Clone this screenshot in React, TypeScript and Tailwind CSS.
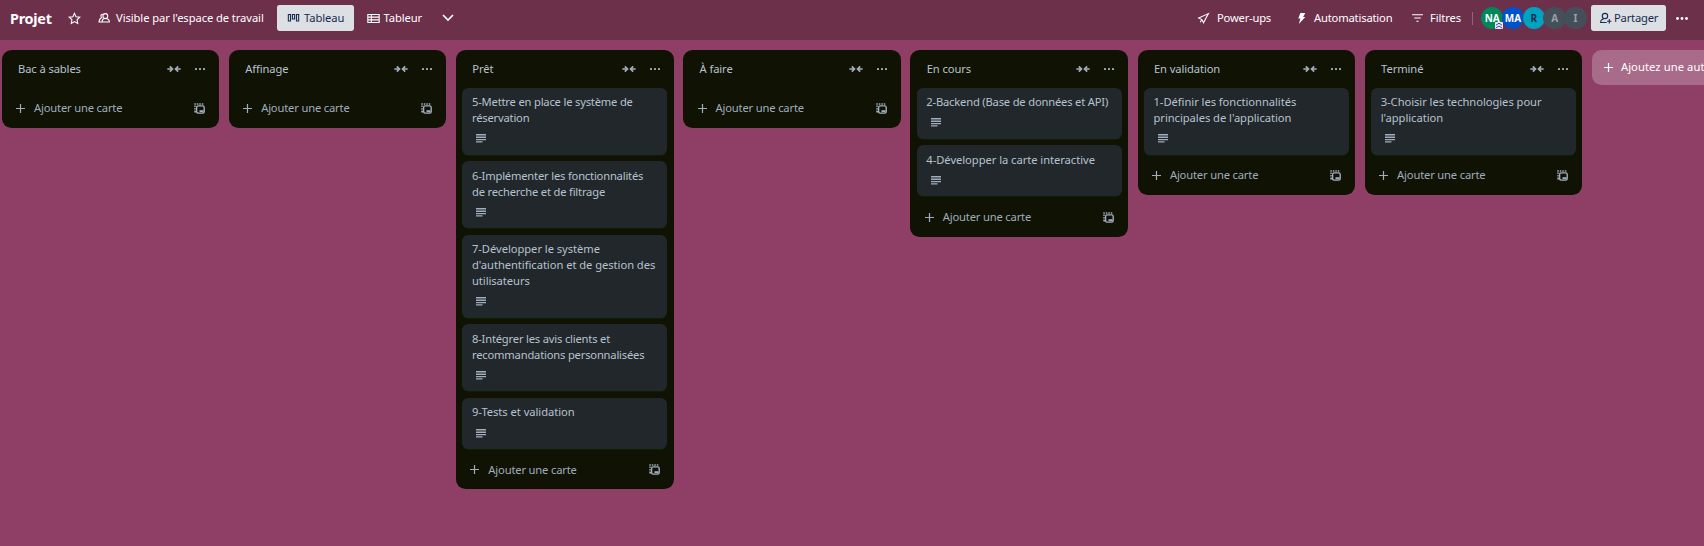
import React from "react";

type CardData = { text: string; tight?: boolean };
type ListData = { title: string; cards: CardData[] };

const lists: ListData[] = [
  { title: "Bac à sables", cards: [] },
  { title: "Affinage", cards: [] },
  {
    title: "Prêt",
    cards: [
      { text: "5-Mettre en place le système de\nréservation", tight: true },
      { text: "6-Implémenter les fonctionnalités\nde recherche et de filtrage", tight: true },
      { text: "7-Développer le système\nd'authentification et de gestion des\nutilisateurs" },
      { text: "8-Intégrer les avis clients et\nrecommandations personnalisées", tight: true },
      { text: "9-Tests et validation" },
    ],
  },
  { title: "À faire", cards: [] },
  {
    title: "En cours",
    cards: [{ text: "2-Backend (Base de données et API)", tight: true }, { text: "4-Développer la carte interactive" }],
  },
  { title: "En validation", cards: [{ text: "1-Définir les fonctionnalités\nprincipales de l'application" }] },
  { title: "Terminé", cards: [{ text: "3-Choisir les technologies pour\nl'application" }] },
];

const members = [
  { initials: "NA", style: "bg-[#00875a] text-white" },
  { initials: "MA", style: "bg-[#0052cc] text-white" },
  { initials: "R", style: "bg-[#00a3bf] text-[#172b4d]" },
  { initials: "A", style: "bg-[#454f59] text-[#9aa0aa]" },
  { initials: "I", style: "bg-[#454f59] text-[#9aa0aa]" },
];

function Icon({ children, className = "" }: { children: React.ReactNode; className?: string }) {
  return (
    <svg viewBox="0 0 24 24" fill="none" stroke="currentColor" strokeWidth="2" className={`size-[13px] shrink-0 ${className}`}>
      {children}
    </svg>
  );
}

const Plus = () => (
  <svg viewBox="0 0 9 9" fill="none" stroke="currentColor" strokeWidth="1.2" className="size-[9px] shrink-0">
    <path d="M4.500 0v9M0 4.500h9" />
  </svg>
);

const Dots = () => (
  <svg viewBox="0 0 10 2" fill="currentColor" className="h-0.5 w-2.5 shrink-0">
    <rect width="2" height="2" rx="0.6" />
    <rect x="4" width="2" height="2" rx="0.6" />
    <rect x="8" width="2" height="2" rx="0.6" />
  </svg>
);

const Collapse = () => (
  <svg viewBox="0 0 14 8" fill="none" stroke="currentColor" strokeWidth="1.700" className="h-2 w-3.5 shrink-0">
    <path d="M0.300 4h5M2.800 1.300L5.500 4 2.800 6.700M13.700 4h-5M11.200 1.300L8.500 4l2.700 2.700" />
  </svg>
);

const Template = () => (
  <svg viewBox="0 0 11 11" fill="none" stroke="currentColor" strokeWidth="1.400" className="size-[11px] shrink-0">
    <rect x="2.600" y="2.900" width="7.600" height="7.200" rx="1.500" />
    <path d="M5.500 8.200h4" strokeWidth="2" />
    <path d="M0.300 1h1.500M2.800 1h1.500M5.300 1h1.500M7.800 1h1.500M1 2.500v1.500M1 5v1.500M1 7.500v1.300h1.500" />
  </svg>
);

function Card({ card }: { card: CardData }) {
  return (
    <li className="rounded-[6.4px] bg-[#22272b] px-[9.6px] pt-[6.4px] pb-[3.2px] shadow-[0_1px_1px_#0308]">
      <p className={`leading-4 whitespace-pre ${card.tight ? "tracking-[-0.19px]" : "tracking-[-0.05px]"}`}>{card.text}</p>
      <div className="flex h-[25.6px] items-center pl-[4.4px] text-[#9fadbc]">
        <svg viewBox="0 0 10 9" className="h-[9px] w-2.5" fill="currentColor">
          <path d="M0 0h10v1.400H0zM0 2.600h10v1.300H0zM0 5h10v1.200H0zM0 7.300h6.500v1.200H0z" />
        </svg>
      </div>
    </li>
  );
}

function List({ list }: { list: ListData }) {
  return (
    <section className="w-[217.6px] shrink-0 rounded-[9.6px] bg-[#101204] px-[6.4px] text-[#b6c2cf]">
      <header className="flex h-[38px] items-center pr-[7.6px] pl-[10px]">
        <h2 className="flex-1 tracking-[-0.1px]">{list.title}</h2>
        <span className="flex items-center gap-[14px] text-[#9fadbc]">
          <Collapse />
          <Dots />
        </span>
      </header>
      <ol className="flex flex-col gap-[6.4px]">
        {list.cards.map((card) => (
          <Card key={card.text} card={card} />
        ))}
      </ol>
      <footer className="flex h-[40.4px] items-center pt-px pr-[7.500px] pl-[8px] text-[#9fadbc]">
        <Plus />
        <span className="flex-1 pl-[9px] tracking-[-0.17px]">Ajouter une carte</span>
        <Template />
      </footer>
    </section>
  );
}

export default function App() {
  return (
    <div className="flex h-[546px] w-[1704px] flex-col overflow-hidden bg-[#8f3f65] font-['Noto_Sans',sans-serif] text-[11.2px] leading-4">
      <nav className="flex h-10 shrink-0 items-center bg-[#6d304b] pr-[16px] pb-1 pl-[10px] text-white">
        <h1 className="w-[58px] pt-0.5 text-[14.4px] font-bold tracking-[-0.25px]">Projet</h1>
        <Icon className="mr-[17px]">
          <path d="M12 2.500l2.900 6.300 6.800.8-5 4.700 1.300 6.800-6-3.400-6 3.400 1.300-6.800-5-4.700 6.800-.8z" />
        </Icon>
        <Icon className="mr-[5px]">
          <circle cx="13.500" cy="7.500" r="4.500" />
          <path d="M7.500 18.500c0-4.500 2-6.500 6-6.500s7.500 2 7.500 6.500zM9 4c-4 0-4.500 3-2.500 6.500C3 12 2 14 2 18.500h5" />
        </Icon>
        <span className="w-[161px] tracking-[-0.08px]">Visible par l'espace de travail</span>
        <button className="flex h-[26px] w-[77px] items-center gap-[4px] rounded-[2.4px] bg-[#dcdfe4] pl-[10px] tracking-[-0.08px] text-[#172b4d]">
          <Icon>
            <path d="M2.500 4.500h4v12H2.500zM10 4.500h4v8.500h-4zM17.500 4.500h4v12h-4z" />
          </Icon>
          Tableau
        </button>
        <button className="flex w-[88px] items-center gap-[4px] pl-[12.500px] tracking-[-0.08px]">
          <Icon>
            <path d="M1.500 4.500h21v15h-21zM1.500 9.500h21M1.500 14.500h21M8 4.500v15" />
          </Icon>
          Tableur
        </button>
        <svg viewBox="0 0 12 8" className="h-2 w-3" fill="none" stroke="currentColor" strokeWidth="1.700">
          <path d="M1 1l5 5 5-5" />
        </svg>
        <div className="ml-auto flex items-center">
          <Icon className="mr-[7px]">
            <path d="M21 3L3 11l6 3 3 6zM9 14l-3 5" />
          </Icon>
          <span className="w-[78px] tracking-[-0.2px]">Power-ups</span>
          <Icon className="mr-[6px]">
            <path d="M10 2h9l-4 7h4L7 22l3-10H6z" fill="currentColor" stroke="none" />
          </Icon>
          <span className="w-[97px] tracking-[-0.17px]">Automatisation</span>
          <Icon className="mr-[6px]">
            <path d="M2 5h20M6 11h12M10 17h4" />
          </Icon>
          <span className="w-[42px] tracking-[-0.1px]">Filtres</span>
          <span className="mr-[8px] h-[13px] w-px bg-white/25" />
          <ul className="flex">
            {members.map((m) => (
              <li key={m.initials} className={`relative mr-[-1.600px] flex size-[22.400px] items-center justify-center rounded-full text-[10px] font-bold ${m.style}`}>
                {m.initials}
                {m.initials === "NA" && (
                  <svg viewBox="0 0 8 7" className="absolute right-0 bottom-0 h-[7px] w-2">
                    <rect width="8" height="7" rx="1" fill="#e8e9fa" />
                    <path d="M1 3.200l3-2 3 2M1 6l3-2 3 2" fill="none" stroke="#4c43a8" />
                  </svg>
                )}
              </li>
            ))}
          </ul>
          <button className="ml-[6px] flex h-[26px] w-[75px] items-center gap-[2.500px] rounded-[2.4px] bg-[#dcdfe4] pl-[7.500px] tracking-[-0.2px] text-[#172b4d]">
            <Icon>
              <circle cx="11" cy="7.500" r="5" />
              <path d="M14 19.500H3c0-4 2-6 6-7M19 13v8M15 17h8" />
            </Icon>
            Partager
          </button>
          <svg viewBox="0 0 12 3" fill="currentColor" className="ml-[10px] h-[3px] w-3">
            <circle cx="1.500" cy="1.500" r="1.400" />
            <circle cx="6" cy="1.500" r="1.400" />
            <circle cx="10.500" cy="1.500" r="1.400" />
          </svg>
        </div>
      </nav>
      <main className="flex items-start gap-[9.6px] pt-[9.6px] pl-[1.6px]">
        {lists.map((list) => (
          <List key={list.title} list={list} />
        ))}
        <button className="flex h-[35.200px] w-[217.6px] shrink-0 items-center rounded-[9.6px] bg-[#a96b8a] pl-[12px] text-white">
          <Plus />
          <span className="pl-[8px] tracking-[0.080px] whitespace-nowrap">Ajoutez une autre liste</span>
        </button>
      </main>
    </div>
  );
}
